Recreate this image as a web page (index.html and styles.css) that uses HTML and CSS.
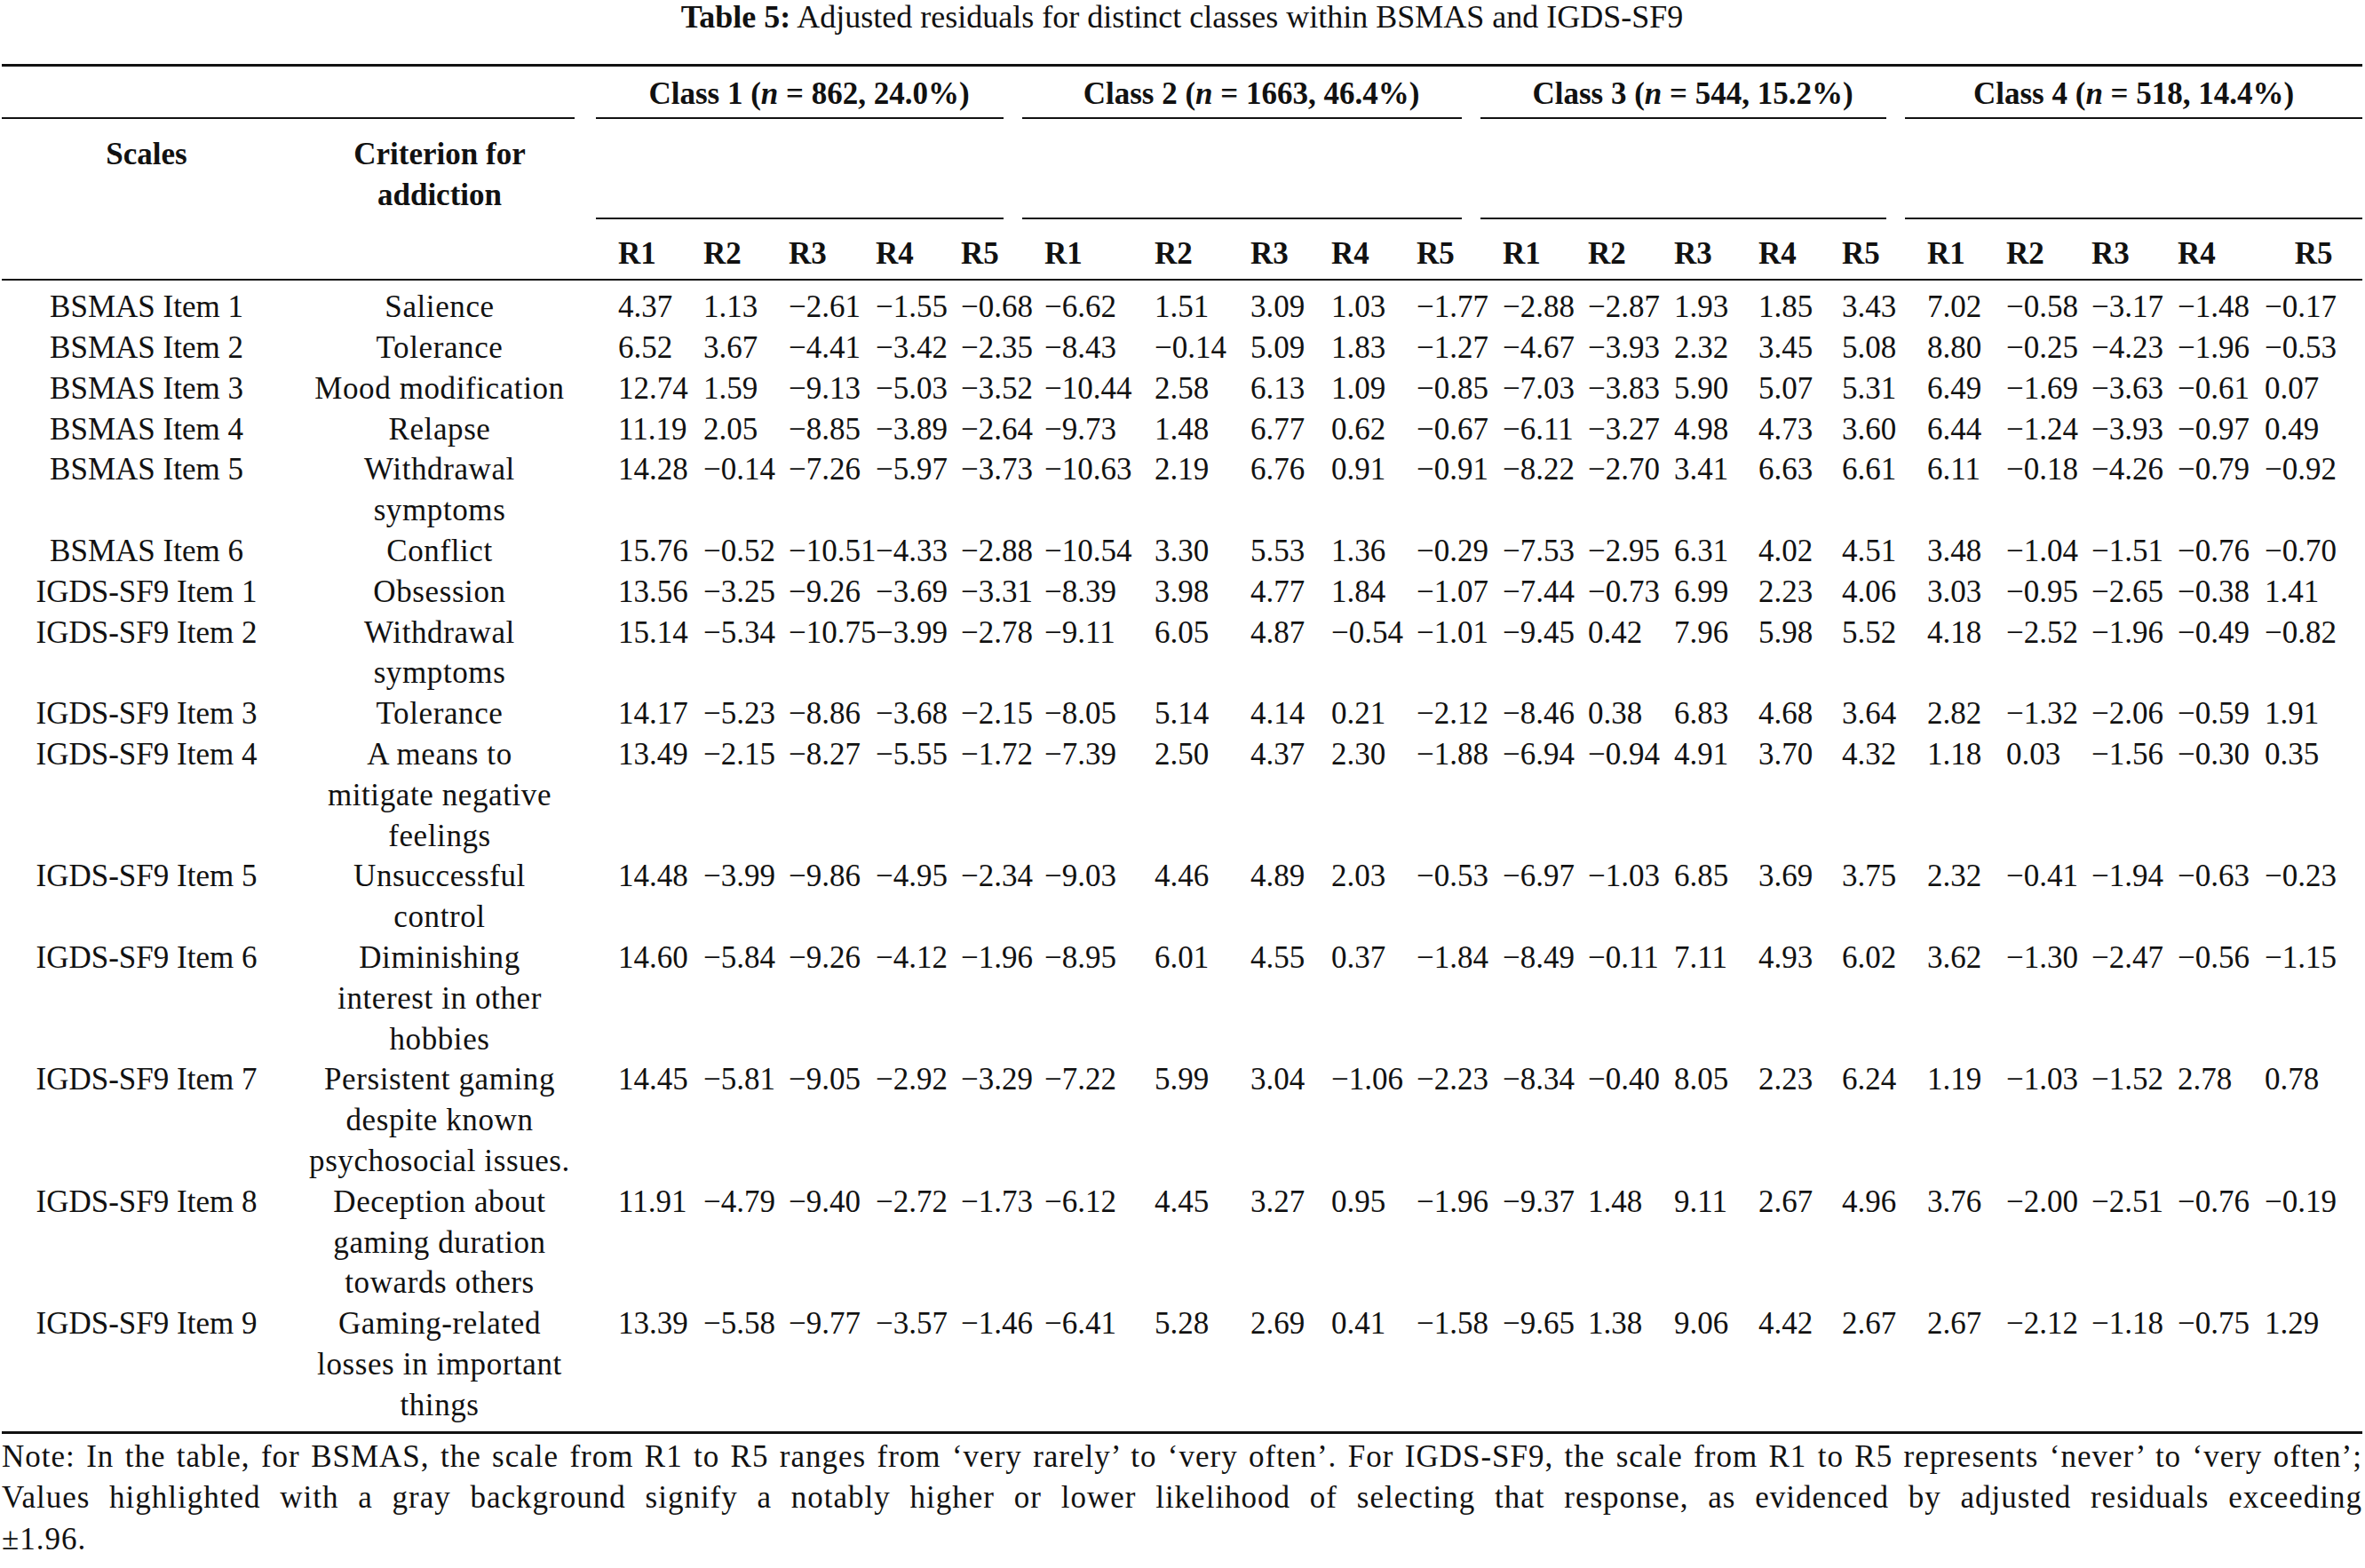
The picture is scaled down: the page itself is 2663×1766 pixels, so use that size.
FILE: index.html
```html
<!DOCTYPE html>
<html lang="en">
<head>
<meta charset="utf-8">
<title>Table 5</title>
<link rel="stylesheet" href="styles.css">
</head>
<body>
<div class="page">
  <h1 class="title"><b>Table 5:</b> Adjusted residuals for distinct classes within BSMAS and IGDS-SF9</h1>
  <table class="tbl">
    <colgroup>
      <col class="w326"><col class="w334">
      <col class="w96"><col class="w96"><col class="w98"><col class="w96"><col class="w94">
      <col class="w124"><col class="w108"><col class="w91"><col class="w96"><col class="w97">
      <col class="w96"><col class="w97"><col class="w95"><col class="w94"><col class="w96">
      <col class="w89"><col class="w96"><col class="w97"><col class="w98"><col class="w144">
    </colgroup>
    <thead>
      <tr class="h1">
        <th colspan="2"><div class="rule first"></div></th>
        <th colspan="5"><div class="cls">Class 1 (<i>n</i> = 862, 24.0%)</div></th>
        <th colspan="5"><div class="cls">Class 2 (<i>n</i> = 1663, 46.4%)</div></th>
        <th colspan="5"><div class="cls">Class 3 (<i>n</i> = 544, 15.2%)</div></th>
        <th colspan="5"><div class="cls last">Class 4 (<i>n</i> = 518, 14.4%)</div></th>
      </tr>
      <tr class="h2">
        <th class="lbl">Scales</th>
        <th class="lbl">Criterion for<br>addiction</th>
        <th colspan="5" class="sp"><div class="rule"></div></th>
        <th colspan="5" class="sp"><div class="rule"></div></th>
        <th colspan="5" class="sp"><div class="rule"></div></th>
        <th colspan="5" class="sp"><div class="rule last"></div></th>
      </tr>
      <tr class="h3">
        <th class="blank"></th><th class="blank"></th>
        <th>R1</th><th>R2</th><th>R3</th><th>R4</th><th>R5</th>
        <th>R1</th><th>R2</th><th>R3</th><th>R4</th><th>R5</th>
        <th>R1</th><th>R2</th><th>R3</th><th>R4</th><th>R5</th>
        <th>R1</th><th>R2</th><th>R3</th><th>R4</th><th class="ctr">R5</th>
      </tr>
    </thead>
    <tbody>
      <tr><td class="s">BSMAS Item 1</td><td class="c">Salience</td>
        <td class="v">4.37</td><td class="v">1.13</td><td class="v">−2.61</td><td class="v">−1.55</td><td class="v">−0.68</td>
        <td class="v">−6.62</td><td class="v">1.51</td><td class="v">3.09</td><td class="v">1.03</td><td class="v">−1.77</td>
        <td class="v">−2.88</td><td class="v">−2.87</td><td class="v">1.93</td><td class="v">1.85</td><td class="v">3.43</td>
        <td class="v">7.02</td><td class="v">−0.58</td><td class="v">−3.17</td><td class="v">−1.48</td><td class="v">−0.17</td></tr>
      <tr><td class="s">BSMAS Item 2</td><td class="c">Tolerance</td>
        <td class="v">6.52</td><td class="v">3.67</td><td class="v">−4.41</td><td class="v">−3.42</td><td class="v">−2.35</td>
        <td class="v">−8.43</td><td class="v">−0.14</td><td class="v">5.09</td><td class="v">1.83</td><td class="v">−1.27</td>
        <td class="v">−4.67</td><td class="v">−3.93</td><td class="v">2.32</td><td class="v">3.45</td><td class="v">5.08</td>
        <td class="v">8.80</td><td class="v">−0.25</td><td class="v">−4.23</td><td class="v">−1.96</td><td class="v">−0.53</td></tr>
      <tr><td class="s">BSMAS Item 3</td><td class="c">Mood modification</td>
        <td class="v">12.74</td><td class="v">1.59</td><td class="v">−9.13</td><td class="v">−5.03</td><td class="v">−3.52</td>
        <td class="v">−10.44</td><td class="v">2.58</td><td class="v">6.13</td><td class="v">1.09</td><td class="v">−0.85</td>
        <td class="v">−7.03</td><td class="v">−3.83</td><td class="v">5.90</td><td class="v">5.07</td><td class="v">5.31</td>
        <td class="v">6.49</td><td class="v">−1.69</td><td class="v">−3.63</td><td class="v">−0.61</td><td class="v">0.07</td></tr>
      <tr><td class="s">BSMAS Item 4</td><td class="c">Relapse</td>
        <td class="v">11.19</td><td class="v">2.05</td><td class="v">−8.85</td><td class="v">−3.89</td><td class="v">−2.64</td>
        <td class="v">−9.73</td><td class="v">1.48</td><td class="v">6.77</td><td class="v">0.62</td><td class="v">−0.67</td>
        <td class="v">−6.11</td><td class="v">−3.27</td><td class="v">4.98</td><td class="v">4.73</td><td class="v">3.60</td>
        <td class="v">6.44</td><td class="v">−1.24</td><td class="v">−3.93</td><td class="v">−0.97</td><td class="v">0.49</td></tr>
      <tr><td class="s">BSMAS Item 5</td><td class="c">Withdrawal<br>symptoms</td>
        <td class="v">14.28</td><td class="v">−0.14</td><td class="v">−7.26</td><td class="v">−5.97</td><td class="v">−3.73</td>
        <td class="v">−10.63</td><td class="v">2.19</td><td class="v">6.76</td><td class="v">0.91</td><td class="v">−0.91</td>
        <td class="v">−8.22</td><td class="v">−2.70</td><td class="v">3.41</td><td class="v">6.63</td><td class="v">6.61</td>
        <td class="v">6.11</td><td class="v">−0.18</td><td class="v">−4.26</td><td class="v">−0.79</td><td class="v">−0.92</td></tr>
      <tr><td class="s">BSMAS Item 6</td><td class="c">Conflict</td>
        <td class="v">15.76</td><td class="v">−0.52</td><td class="v">−10.51</td><td class="v">−4.33</td><td class="v">−2.88</td>
        <td class="v">−10.54</td><td class="v">3.30</td><td class="v">5.53</td><td class="v">1.36</td><td class="v">−0.29</td>
        <td class="v">−7.53</td><td class="v">−2.95</td><td class="v">6.31</td><td class="v">4.02</td><td class="v">4.51</td>
        <td class="v">3.48</td><td class="v">−1.04</td><td class="v">−1.51</td><td class="v">−0.76</td><td class="v">−0.70</td></tr>
      <tr><td class="s">IGDS-SF9 Item 1</td><td class="c">Obsession</td>
        <td class="v">13.56</td><td class="v">−3.25</td><td class="v">−9.26</td><td class="v">−3.69</td><td class="v">−3.31</td>
        <td class="v">−8.39</td><td class="v">3.98</td><td class="v">4.77</td><td class="v">1.84</td><td class="v">−1.07</td>
        <td class="v">−7.44</td><td class="v">−0.73</td><td class="v">6.99</td><td class="v">2.23</td><td class="v">4.06</td>
        <td class="v">3.03</td><td class="v">−0.95</td><td class="v">−2.65</td><td class="v">−0.38</td><td class="v">1.41</td></tr>
      <tr><td class="s">IGDS-SF9 Item 2</td><td class="c">Withdrawal<br>symptoms</td>
        <td class="v">15.14</td><td class="v">−5.34</td><td class="v">−10.75</td><td class="v">−3.99</td><td class="v">−2.78</td>
        <td class="v">−9.11</td><td class="v">6.05</td><td class="v">4.87</td><td class="v">−0.54</td><td class="v">−1.01</td>
        <td class="v">−9.45</td><td class="v">0.42</td><td class="v">7.96</td><td class="v">5.98</td><td class="v">5.52</td>
        <td class="v">4.18</td><td class="v">−2.52</td><td class="v">−1.96</td><td class="v">−0.49</td><td class="v">−0.82</td></tr>
      <tr><td class="s">IGDS-SF9 Item 3</td><td class="c">Tolerance</td>
        <td class="v">14.17</td><td class="v">−5.23</td><td class="v">−8.86</td><td class="v">−3.68</td><td class="v">−2.15</td>
        <td class="v">−8.05</td><td class="v">5.14</td><td class="v">4.14</td><td class="v">0.21</td><td class="v">−2.12</td>
        <td class="v">−8.46</td><td class="v">0.38</td><td class="v">6.83</td><td class="v">4.68</td><td class="v">3.64</td>
        <td class="v">2.82</td><td class="v">−1.32</td><td class="v">−2.06</td><td class="v">−0.59</td><td class="v">1.91</td></tr>
      <tr><td class="s">IGDS-SF9 Item 4</td><td class="c">A means to<br>mitigate negative<br>feelings</td>
        <td class="v">13.49</td><td class="v">−2.15</td><td class="v">−8.27</td><td class="v">−5.55</td><td class="v">−1.72</td>
        <td class="v">−7.39</td><td class="v">2.50</td><td class="v">4.37</td><td class="v">2.30</td><td class="v">−1.88</td>
        <td class="v">−6.94</td><td class="v">−0.94</td><td class="v">4.91</td><td class="v">3.70</td><td class="v">4.32</td>
        <td class="v">1.18</td><td class="v">0.03</td><td class="v">−1.56</td><td class="v">−0.30</td><td class="v">0.35</td></tr>
      <tr><td class="s">IGDS-SF9 Item 5</td><td class="c">Unsuccessful<br>control</td>
        <td class="v">14.48</td><td class="v">−3.99</td><td class="v">−9.86</td><td class="v">−4.95</td><td class="v">−2.34</td>
        <td class="v">−9.03</td><td class="v">4.46</td><td class="v">4.89</td><td class="v">2.03</td><td class="v">−0.53</td>
        <td class="v">−6.97</td><td class="v">−1.03</td><td class="v">6.85</td><td class="v">3.69</td><td class="v">3.75</td>
        <td class="v">2.32</td><td class="v">−0.41</td><td class="v">−1.94</td><td class="v">−0.63</td><td class="v">−0.23</td></tr>
      <tr><td class="s">IGDS-SF9 Item 6</td><td class="c">Diminishing<br>interest in other<br>hobbies</td>
        <td class="v">14.60</td><td class="v">−5.84</td><td class="v">−9.26</td><td class="v">−4.12</td><td class="v">−1.96</td>
        <td class="v">−8.95</td><td class="v">6.01</td><td class="v">4.55</td><td class="v">0.37</td><td class="v">−1.84</td>
        <td class="v">−8.49</td><td class="v">−0.11</td><td class="v">7.11</td><td class="v">4.93</td><td class="v">6.02</td>
        <td class="v">3.62</td><td class="v">−1.30</td><td class="v">−2.47</td><td class="v">−0.56</td><td class="v">−1.15</td></tr>
      <tr><td class="s">IGDS-SF9 Item 7</td><td class="c">Persistent gaming<br>despite known<br>psychosocial issues.</td>
        <td class="v">14.45</td><td class="v">−5.81</td><td class="v">−9.05</td><td class="v">−2.92</td><td class="v">−3.29</td>
        <td class="v">−7.22</td><td class="v">5.99</td><td class="v">3.04</td><td class="v">−1.06</td><td class="v">−2.23</td>
        <td class="v">−8.34</td><td class="v">−0.40</td><td class="v">8.05</td><td class="v">2.23</td><td class="v">6.24</td>
        <td class="v">1.19</td><td class="v">−1.03</td><td class="v">−1.52</td><td class="v">2.78</td><td class="v">0.78</td></tr>
      <tr><td class="s">IGDS-SF9 Item 8</td><td class="c">Deception about<br>gaming duration<br>towards others</td>
        <td class="v">11.91</td><td class="v">−4.79</td><td class="v">−9.40</td><td class="v">−2.72</td><td class="v">−1.73</td>
        <td class="v">−6.12</td><td class="v">4.45</td><td class="v">3.27</td><td class="v">0.95</td><td class="v">−1.96</td>
        <td class="v">−9.37</td><td class="v">1.48</td><td class="v">9.11</td><td class="v">2.67</td><td class="v">4.96</td>
        <td class="v">3.76</td><td class="v">−2.00</td><td class="v">−2.51</td><td class="v">−0.76</td><td class="v">−0.19</td></tr>
      <tr><td class="s">IGDS-SF9 Item 9</td><td class="c">Gaming-related<br>losses in important<br>things</td>
        <td class="v">13.39</td><td class="v">−5.58</td><td class="v">−9.77</td><td class="v">−3.57</td><td class="v">−1.46</td>
        <td class="v">−6.41</td><td class="v">5.28</td><td class="v">2.69</td><td class="v">0.41</td><td class="v">−1.58</td>
        <td class="v">−9.65</td><td class="v">1.38</td><td class="v">9.06</td><td class="v">4.42</td><td class="v">2.67</td>
        <td class="v">2.67</td><td class="v">−2.12</td><td class="v">−1.18</td><td class="v">−0.75</td><td class="v">1.29</td></tr>
    </tbody>
  </table>
  <p class="note"><span class="ln">Note: In the table, for BSMAS, the scale from R1 to R5 ranges from ‘very rarely’ to ‘very often’. For IGDS-SF9, the scale from R1 to R5 represents ‘never’ to ‘very often’;</span><span class="ln">Values highlighted with a gray background signify a notably higher or lower likelihood of selecting that response, as evidenced by adjusted residuals exceeding</span>±1.96.</p>
</div>
</body>
</html>
```

FILE: styles.css
```css
html, body {
  margin: 0;
  padding: 0;
  background: #ffffff;
}

body {
  color: #111111;
  font-family: "Liberation Serif", "Times New Roman", serif;
}

.page {
  padding: 0 3px 0 2px;
}

.title {
  font-size: 36px;
  line-height: 32px;
  font-weight: 400;
  text-align: center;
  padding-top: 3px;
  margin: 0 0 37px;
}

.title b {
  font-weight: 700;
}

.tbl {
  table-layout: fixed;
  width: 2658px;
  border-collapse: separate;
  border-spacing: 0;
  border-top: 3px solid #111111;
  border-bottom: 3px solid #111111;
  font-size: 35px;
  line-height: 45.8px;
}

.w89 { width: 89px; }
.w91 { width: 91px; }
.w94 { width: 94px; }
.w95 { width: 95px; }
.w96 { width: 96px; }
.w97 { width: 97px; }
.w98 { width: 98px; }
.w108 { width: 108px; }
.w124 { width: 124px; }
.w144 { width: 144px; }
.w326 { width: 326px; }
.w334 { width: 334px; }

.tbl th,
.tbl td {
  padding: 0;
  white-space: nowrap;
  vertical-align: top;
  text-align: left;
  font-weight: 400;
}

.tbl thead th {
  font-weight: 700;
}

.h1 th {
  padding-top: 8px;
  vertical-align: bottom;
}

.cls {
  text-align: center;
  padding: 0 0 3px 21px;
  border-bottom: 2px solid #111111;
  margin: 0 12px 0 9px;
}

.rule {
  border-bottom: 2px solid #111111;
  margin: 0 12px 0 9px;
}

.rule.first {
  margin: 0 15px 0 0;
}

.cls.last {
  padding-left: 0;
  margin-right: 0;
}

.rule.last {
  margin-right: 0;
}

.h2 .lbl {
  padding: 17px 0 5px;
  text-align: center;
}

.h2 .sp {
  vertical-align: bottom;
}

.h3 th {
  padding: 16px 0 5px 34px;
  border-bottom: 2px solid #111111;
}

.h3 th.blank {
  padding-left: 0;
}

.h3 th.ctr {
  text-align: center;
}

.tbl td.s,
.tbl td.c {
  text-align: center;
}

.tbl td.c {
  letter-spacing: 0.6px;
}

.tbl td.v {
  padding-left: 34px;
}

.tbl tbody tr:first-child td {
  padding-top: 7px;
}

.tbl tbody tr:last-child td {
  padding-bottom: 6px;
}

.note {
  font-size: 35px;
  line-height: 46.6px;
  letter-spacing: 1px;
  margin: 3px 0 0;
}

.note .ln {
  display: block;
  text-align: justify;
  text-align-last: justify;
}
```
